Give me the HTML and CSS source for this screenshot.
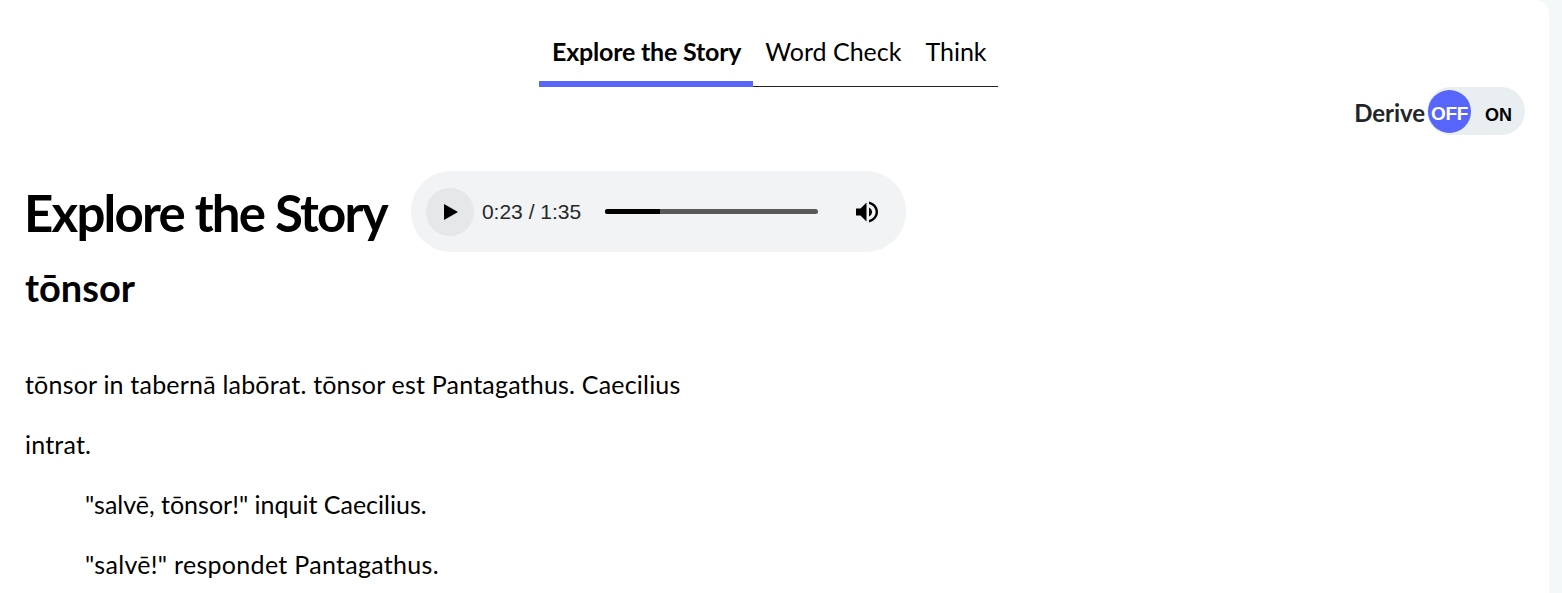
FILE: index.html
```html
<!DOCTYPE html>
<html lang="la">
<head>
<meta charset="utf-8">
<title>Explore the Story</title>
<link rel="stylesheet" href="styles.css">
</head>
<body>
<main class="card">
  <nav class="tabs">
    <a class="tab active">Explore the Story</a>
    <a class="tab">Word Check</a>
    <a class="tab">Think</a>
  </nav>
  <div class="derive-row">
    <span class="derive-label">Derive</span>
    <div class="switch">
      <span class="knob">OFF</span>
      <span class="on">ON</span>
    </div>
  </div>
  <div class="title-row">
    <h1>Explore the Story</h1>
    <div class="player">
      <span class="play"><svg width="14" height="16" viewBox="0 0 14 16"><path d="M0 0L14 8L0 16Z" fill="#000"/></svg></span>
      <span class="time">0:23 / 1:35</span>
      <span class="track"><span class="fill"></span></span>
      <svg class="vol" width="24" height="24" viewBox="0 0 24 24"><path d="M1 8.5H5.5L11.5 2.5V21.5L5.5 15.5H1Z" fill="#000"/><path d="M14 7.5C16.2 8.7 17 10.2 17 12S16.2 15.3 14 16.5Z" fill="#000"/><path d="M14 1.6C19.5 3 23 7 23 12S19.5 21 14 22.4V20C18 18.8 20.6 15.7 20.6 12S18 5.2 14 4Z" fill="#000"/></svg>
    </div>
  </div>
  <h2>tōnsor</h2>
  <div class="story">
    <p>tōnsor in tabernā labōrat. tōnsor est Pantagathus. Caecilius</p>
    <p>intrat.</p>
    <p class="indent tight">"salvē, tōnsor!" inquit Caecilius.</p>
    <p class="indent wide">"salvē!" respondet Pantagathus.</p>
  </div>
</main>
</body>
</html>
```
FILE: styles.css
```css
html, body { margin: 0; height: 100%; overflow: hidden; }
body { background: #f5f8f9; font-family: "Lato", "Open Sans", sans-serif; color: #000; }
.card { width: 1549px; height: 593px; box-sizing: border-box; background: #fff; border-top-right-radius: 14px; padding: 0 24px 0 25px; }
.tabs { display: flex; width: 459px; margin-left: 514px; height: 87px; box-sizing: border-box; border-bottom: 1px solid #222; align-items: flex-end; }
.tab { font-size: 25px; line-height: 34px; padding: 0 12px 13px; margin-bottom: -1px; border-bottom: 6px solid transparent; white-space: nowrap; }
.tab.active { font-weight: 700; letter-spacing: -.2px; border-bottom-color: #5865fb; padding-left: 13px; }
.derive-row { display: flex; justify-content: flex-end; align-items: center; height: 48px; }
.derive-label { font-size: 24px; font-weight: 700; letter-spacing: -.07px; color: #212529; padding-top: 2px; }
.switch { width: 98px; height: 48px; border-radius: 24px; background: #e9eef0; display: flex; align-items: center; padding-left: 1px; box-sizing: border-box; margin-left: 2px; }
.knob { width: 43px; height: 43px; border-radius: 50%; background: #5865fb; color: #fff; font: 700 19px/47px "Liberation Sans", sans-serif; text-align: center; letter-spacing: -.4px; }
.on { font: 700 18px/24px "Liberation Sans", sans-serif; margin-left: 14px; padding-top: 7px; }
.title-row { display: flex; align-items: center; margin-top: 36px; height: 81px; }
h1 { margin: -1px 0 0 -1px; padding-top: 2px; font-size: 51px; font-weight: 700; letter-spacing: -1.77px; line-height: 81px; white-space: nowrap; }
.player { width: 495px; height: 81px; margin-left: 24px; border-radius: 40px; background: #f1f3f4; display: flex; align-items: center; box-sizing: border-box; padding-left: 15px; }
.play { width: 48px; height: 48px; border-radius: 50%; background: #e5e7e9; display: flex; align-items: center; justify-content: center; flex: none; }
.play svg { margin-left: 2px; }
.time { font: 21px "Liberation Sans", sans-serif; color: #26282a; margin-left: 8px; width: 100px; white-space: nowrap; }
.track { width: 213px; height: 5px; margin-left: 23px; border-radius: 3px; background: #595959; display: block; overflow: hidden; }
.fill { display: block; width: 55px; height: 5px; background: #000; }
.vol { margin-left: 37px; }
h2 { margin: 12px 0 0; font-size: 38px; font-weight: 700; line-height: 46px; }
.story { margin-top: 59px; font-size: 25px; line-height: 30px; letter-spacing: .2px; }
.story p { margin: 0 0 30px; white-space: nowrap; }
.story .indent { padding-left: 60px; }
.story .tight { letter-spacing: 0; }
.story .wide { letter-spacing: .3px; }
```
